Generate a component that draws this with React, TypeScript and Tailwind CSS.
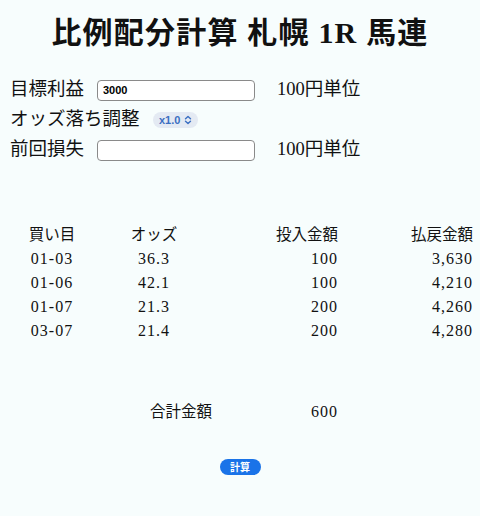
import React from 'react';

const serif = { fontFamily: '"Liberation Serif", "Noto Sans CJK JP", serif' };

const rows = [
  { kaime: '01-03', odds: '36.3', bet: '100', pay: '3,630' },
  { kaime: '01-06', odds: '42.1', bet: '100', pay: '4,210' },
  { kaime: '01-07', odds: '21.3', bet: '200', pay: '4,260' },
  { kaime: '03-07', odds: '21.4', bet: '200', pay: '4,280' },
];

const App: React.FC = () => {
  return (
    <div className="w-[480px] h-[516px] bg-[#f7fdfd] text-[#111]" style={serif}>
      <h1 className="pt-[14px] text-center text-[30px] leading-[38px] font-bold tracking-[1.2px]">
        比例配分計算 札幌 1R 馬連
      </h1>

      {/* form */}
      <div className="mt-[23px] pl-[10px] text-[18.5px]">
        <div className="flex items-center h-[30px]">
          <span className="w-[87px]">目標利益</span>
          <input
            defaultValue="3000"
            className="w-[158px] h-[21px] border border-[#8a8a8a] rounded-[4px] bg-white px-[5px] text-[11px] font-bold text-black"
            style={{ fontFamily: '"Liberation Sans", Arial, sans-serif' }}
          />
          <span className="ml-[22px]">100円単位</span>
        </div>
        <div className="flex items-center h-[30px]">
          <span className="w-[143px]">オッズ落ち調整</span>
          <span
            className="flex items-center gap-[4px] h-[16px] px-[6px] rounded-full bg-[#e4eaf3] text-[#3b6fc2] text-[11px] font-bold"
            style={{ fontFamily: '"Liberation Sans", Arial, sans-serif' }}
          >
            x1.0
            <svg width="8" height="10" viewBox="0 0 8 10" fill="none" stroke="#3b6fc2" strokeWidth="1.4" strokeLinecap="round" strokeLinejoin="round">
              <path d="M1.5 3.8 L4 1.5 L6.5 3.8" />
              <path d="M1.5 6.2 L4 8.5 L6.5 6.2" />
            </svg>
          </span>
        </div>
        <div className="flex items-center h-[30px]">
          <span className="w-[87px]">前回損失</span>
          <input className="w-[158px] h-[21px] border border-[#8a8a8a] rounded-[4px] bg-white px-[5px] text-[11px]" />
          <span className="ml-[22px]">100円単位</span>
        </div>
      </div>

      {/* table */}
      <div className="mt-[58px] pl-[20px] text-[15.5px]">
        <div className="grid grid-cols-[64px_140px_114px_135px] h-[24px] items-center">
          <span className="text-center">買い目</span>
          <span className="text-center">オッズ</span>
          <span className="text-right">投入金額</span>
          <span className="text-right">払戻金額</span>
        </div>
        {rows.map((r) => (
          <div
            key={r.kaime}
            className="grid grid-cols-[64px_140px_114px_135px] h-[24px] items-center text-[16px] tracking-[1px]"
          >
            <span className="text-center">{r.kaime}</span>
            <span className="text-center">{r.odds}</span>
            <span className="text-right">{r.bet}</span>
            <span className="text-right">{r.pay}</span>
          </div>
        ))}
      </div>

      {/* total */}
      <div className="mt-[57px] pl-[150px] flex items-center h-[24px] text-[15.5px]">
        <span className="w-[150px]">合計金額</span>
        <span className="w-[38px] text-right text-[16px] tracking-[1px]">600</span>
      </div>

      <div className="mt-[35px] flex justify-center">
        <button
          className="h-[16px] w-[41px] rounded-full bg-[#1a73e8] text-white text-[10px] font-bold leading-none"
          style={{ fontFamily: '"Noto Sans CJK JP", sans-serif' }}
        >
          計算
        </button>
      </div>
    </div>
  );
};

export default App;
